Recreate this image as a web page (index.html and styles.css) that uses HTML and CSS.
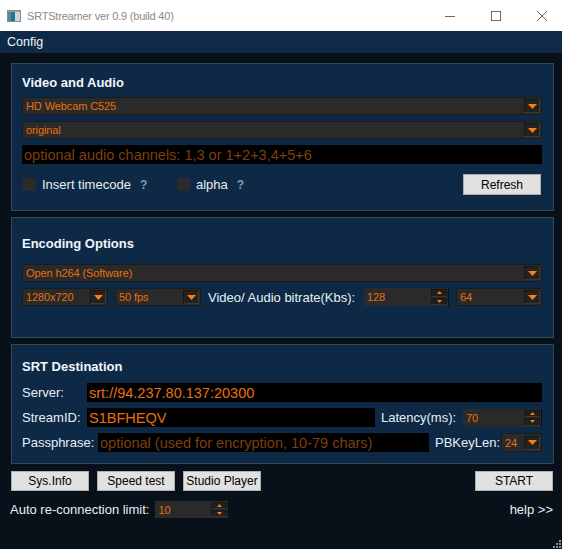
FILE: index.html
```html
<!DOCTYPE html>
<html>
<head>
<meta charset="utf-8">
<title>SRTStreamer</title>
<link rel="stylesheet" href="styles.css">
</head>
<body>
<div class="window">
  <div class="titlebar">
    <svg class="appicon" width="14" height="12" viewBox="0 0 14 12">
      <rect x="0.5" y="0.5" width="13" height="11" fill="#f4f4f4" stroke="#8a8a8a"/>
      <rect x="1" y="2" width="7" height="9" fill="#2f6fa0"/>
      <rect x="1" y="2" width="3" height="9" fill="#3d9a7a"/>
      <rect x="8" y="2" width="5" height="9" fill="#c9d6e0"/>
      <rect x="1" y="1" width="12" height="1" fill="#a0a0a0"/>
    </svg>
    <span class="title">SRTStreamer ver 0.9 (build 40)</span>
    <div class="controls">
      <div class="ctl"><svg width="10" height="10" viewBox="0 0 10 10"><path d="M0 5.5H10" stroke="#6a6a6a" stroke-width="1"/></svg></div>
      <div class="ctl"><svg width="10" height="10" viewBox="0 0 10 10"><rect x="0.5" y="0.5" width="9" height="9" fill="none" stroke="#6a6a6a"/></svg></div>
      <div class="ctl"><svg width="10" height="10" viewBox="0 0 10 10"><path d="M0 0L10 10M10 0L0 10" stroke="#6a6a6a" stroke-width="1"/></svg></div>
    </div>
  </div>
  <div class="menubar"><span class="menu">Config</span></div>

  <div class="main">
    <section class="panel p1">
      <h2>Video and Audio</h2>
      <div class="combo"><span class="val">HD Webcam C525</span><span class="arrow"><svg width="9" height="5" viewBox="0 0 9 5"><path d="M0 0H9L4.5 5Z" fill="#ff7d00"/></svg></span></div>
      <div class="combo gap6"><span class="val">original</span><span class="arrow"><svg width="9" height="5" viewBox="0 0 9 5"><path d="M0 0H9L4.5 5Z" fill="#ff7d00"/></svg></span></div>
      <div class="field big gap6"><span class="ph">optional audio channels: 1,3 or 1+2+3,4+5+6</span></div>
      <div class="checkrow">
        <div class="chk-group g1"><span class="chk"></span><span class="lbl">Insert timecode</span><span class="q">?</span></div>
        <div class="chk-group"><span class="chk"></span><span class="lbl">alpha</span><span class="q">?</span></div>
        <button class="btn refresh">Refresh</button>
      </div>
    </section>

    <section class="panel p2">
      <h2>Encoding Options</h2>
      <div class="combo"><span class="val">Open h264 (Software)</span><span class="arrow"><svg width="9" height="5" viewBox="0 0 9 5"><path d="M0 0H9L4.5 5Z" fill="#ff7d00"/></svg></span></div>
      <div class="row gap6">
        <div class="combo w86"><span class="val">1280x720</span><span class="arrow"><svg width="9" height="5" viewBox="0 0 9 5"><path d="M0 0H9L4.5 5Z" fill="#ff7d00"/></svg></span></div>
        <div class="combo w86 ml7"><span class="val">50 fps</span><span class="arrow"><svg width="9" height="5" viewBox="0 0 9 5"><path d="M0 0H9L4.5 5Z" fill="#ff7d00"/></svg></span></div>
        <span class="lbl ml7">Video/ Audio bitrate(Kbs):</span>
        <div class="spin w85 mlauto"><span class="val">128</span><span class="spinbtns"><span class="sb"><svg width="5" height="3" viewBox="0 0 5 3"><path d="M2.5 0L5 3H0Z" fill="#ff7d00"/></svg></span><span class="sb"><svg width="5" height="3" viewBox="0 0 5 3"><path d="M0 0H5L2.5 3Z" fill="#ff7d00"/></svg></span></span></div>
        <div class="combo w86 ml7"><span class="val">64</span><span class="arrow"><svg width="9" height="5" viewBox="0 0 9 5"><path d="M0 0H9L4.5 5Z" fill="#ff7d00"/></svg></span></div>
      </div>
    </section>

    <section class="panel p3">
      <h2>SRT Destination</h2>
      <div class="row">
        <span class="lbl lw65">Server:</span>
        <div class="field big grow"><span class="txt">srt://94.237.80.137:20300</span></div>
      </div>
      <div class="row gap6">
        <span class="lbl lw65">StreamID:</span>
        <div class="field big w288"><span class="txt">S1BFHEQV</span></div>
        <span class="lbl ml6">Latency(ms):</span>
        <div class="spin w79 mlauto"><span class="val">70</span><span class="spinbtns"><span class="sb"><svg width="5" height="3" viewBox="0 0 5 3"><path d="M2.5 0L5 3H0Z" fill="#ff7d00"/></svg></span><span class="sb"><svg width="5" height="3" viewBox="0 0 5 3"><path d="M0 0H5L2.5 3Z" fill="#ff7d00"/></svg></span></span></div>
      </div>
      <div class="row gap6">
        <span class="lbl lw76">Passphrase:</span>
        <div class="field big w331"><span class="ph">optional (used for encryption, 10-79 chars)</span></div>
        <span class="lbl ml6">PBKeyLen:</span>
        <div class="combo w41 tall mlauto"><span class="val">24</span><span class="arrow"><svg width="9" height="5" viewBox="0 0 9 5"><path d="M0 0H9L4.5 5Z" fill="#ff7d00"/></svg></span></div>
      </div>
    </section>

    <div class="btnrow">
      <button class="btn">Sys.Info</button>
      <button class="btn">Speed test</button>
      <button class="btn">Studio Player</button>
      <button class="btn start">START</button>
    </div>

    <div class="autorow">
      <span class="lbl">Auto re-connection limit:</span>
      <div class="spin w74 small"><span class="val">10</span><span class="spinbtns"><span class="sb"><svg width="5" height="3" viewBox="0 0 5 3"><path d="M2.5 0L5 3H0Z" fill="#ff7d00"/></svg></span><span class="sb"><svg width="5" height="3" viewBox="0 0 5 3"><path d="M0 0H5L2.5 3Z" fill="#ff7d00"/></svg></span></span></div>
      <span class="lbl help">help &gt;&gt;</span>
    </div>
  </div>

  <svg class="grip" width="8" height="8" viewBox="0 0 8 8">
    <rect x="6" y="0" width="2" height="2" fill="#8a8f96"/>
    <rect x="3" y="3" width="2" height="2" fill="#8a8f96"/>
    <rect x="6" y="3" width="2" height="2" fill="#8a8f96"/>
    <rect x="0" y="6" width="2" height="2" fill="#8a8f96"/>
    <rect x="3" y="6" width="2" height="2" fill="#8a8f96"/>
    <rect x="6" y="6" width="2" height="2" fill="#8a8f96"/>
  </svg>
</div>
</body>
</html>
```

FILE: styles.css
```css
* { box-sizing: border-box; }
html, body { margin: 0; padding: 0; }
body {
  background: #08111a;
  font-family: "Liberation Sans", Arial, sans-serif;
}
.window {
  width: 562px;
  height: 549px;
  background: #08111a;
  display: flex;
  flex-direction: column;
  position: relative;
  overflow: hidden;
}
.titlebar {
  height: 31px;
  background: #ffffff;
  display: flex;
  align-items: center;
  flex: none;
}
.appicon { margin-left: 7px; flex: none; }
.title {
  margin-left: 6px;
  font-size: 11px;
  letter-spacing: -0.2px;
  color: #8a8a8a;
}
.controls {
  margin-left: auto;
  margin-right: -3px;
  display: flex;
  height: 100%;
}
.ctl {
  width: 46px;
  height: 100%;
  display: flex;
  align-items: center;
  justify-content: center;
}
.menubar {
  height: 22px;
  background: #0f2a47;
  display: flex;
  align-items: center;
  flex: none;
}
.menu {
  margin-left: 7px;
  color: #f2f5f8;
  font-size: 12.5px;
}
.main {
  padding: 10px 8px 0 11px;
  display: flex;
  flex-direction: column;
}
.panel {
  border: 1px solid #34485c;
  background: #0e2946;
  display: flex;
  flex-direction: column;
  padding-left: 10px;
  padding-right: 11px;
}
.p1 { height: 148px; padding-top: 10px; }
.p2 { height: 121px; padding-top: 17px; margin-top: 6px; }
.p3 { height: 120px; padding-top: 13px; margin-top: 6px; }
h2 {
  margin: 0;
  height: 18px;
  line-height: 18px;
  font-size: 13px;
  font-weight: bold;
  color: #f2f6fa;
}
.p1 h2 { margin-bottom: 5px; }
.p2 h2 { margin-bottom: 11px; }
.p3 h2 { margin-bottom: 7px; }
.gap6 { margin-top: 6px; }

.combo {
  height: 18px;
  background: #2a2a2a;
  border: 1px solid #1b1b1b;
  display: flex;
  align-items: center;
  flex: none;
}
.combo.tall { height: 19px; }
.val {
  color: #e8700c;
  font-size: 11px;
  letter-spacing: -0.1px;
  padding-left: 3px;
  flex: 1;
  white-space: nowrap;
  overflow: hidden;
}
.arrow {
  width: 16px;
  height: 14px;
  margin-right: 1px;
  background: #222222;
  border: 1px solid #161616;
  border-right-color: #3a3a3a;
  border-bottom-color: #3a3a3a;
  display: flex;
  align-items: center;
  justify-content: center;
  flex: none;
}
.field {
  height: 19px;
  background: #000000;
  display: flex;
  align-items: center;
  padding-left: 2px;
  flex: none;
  overflow: hidden;
  white-space: nowrap;
}
.field.big { font-size: 14.5px; }
.ph { color: #7c3f10; }
.txt { color: #e8700c; }
.grow { flex: 1; }
.w288 { width: 288px; }
.w331 { width: 331px; }
.w86 { width: 86px; }
.w85 { width: 85px; }
.w79 { width: 79px; }
.w74 { width: 74px; }
.w41 { width: 41px; }
.ml7 { margin-left: 7px; }
.ml6 { margin-left: 6px; }
.mlauto { margin-left: auto; }

.checkrow {
  margin-top: 10px;
  height: 21px;
  display: flex;
  align-items: center;
}
.chk-group { display: flex; align-items: center; }
.g1 { width: 154px; }
.chk {
  width: 13px;
  height: 13px;
  background: #2b2b2b;
  margin-left: 1px;
  flex: none;
}
.chk-group .lbl { margin-left: 6px; }
.q {
  margin-left: 9px;
  font-size: 12px;
  font-weight: bold;
  color: #8a9bb0;
}
.lbl {
  font-size: 13px;
  color: #e8eef4;
  white-space: nowrap;
}
.lw65 { width: 65px; flex: none; }
.lw76 { width: 76px; flex: none; }

.btn {
  height: 21px;
  width: 78px;
  background: #e1e1e1;
  border: 1px solid #adadad;
  font-family: "Liberation Sans", Arial, sans-serif;
  font-size: 12px;
  color: #000000;
  padding: 0;
  margin: 0;
  flex: none;
}
.refresh { margin-left: auto; margin-right: 1px; }

.row {
  display: flex;
  align-items: center;
  height: 19px;
}
.p2 .row { height: 18px; }

.spin {
  height: 18px;
  background: #2a2a2a;
  display: flex;
  align-items: center;
  flex: none;
  border-right: 1px solid #0e0e0e;
}
.spinbtns {
  display: flex;
  flex-direction: column;
  width: 16px;
  height: 100%;
  margin-right: 1px;
  padding: 1px 0;
  gap: 1px;
}
.sb {
  flex: 1;
  background: #1f1f1f;
  border: 1px solid #181818;
  border-bottom-color: #363636;
  display: flex;
  align-items: center;
  justify-content: center;
}
.spin.small { height: 17px; margin-left: 6px; }

.btnrow {
  margin-top: 7px;
  display: flex;
  gap: 8px;
  height: 20px;
}
.btnrow .btn { height: 20px; }
.start { margin-left: auto; margin-right: 1px; }

.autorow {
  margin-top: 10px;
  height: 17px;
  display: flex;
  align-items: center;
  margin-left: -1px;
}
.help { margin-left: auto; margin-right: 1px; }

.grip {
  position: absolute;
  right: 1px;
  bottom: 1px;
}
```
